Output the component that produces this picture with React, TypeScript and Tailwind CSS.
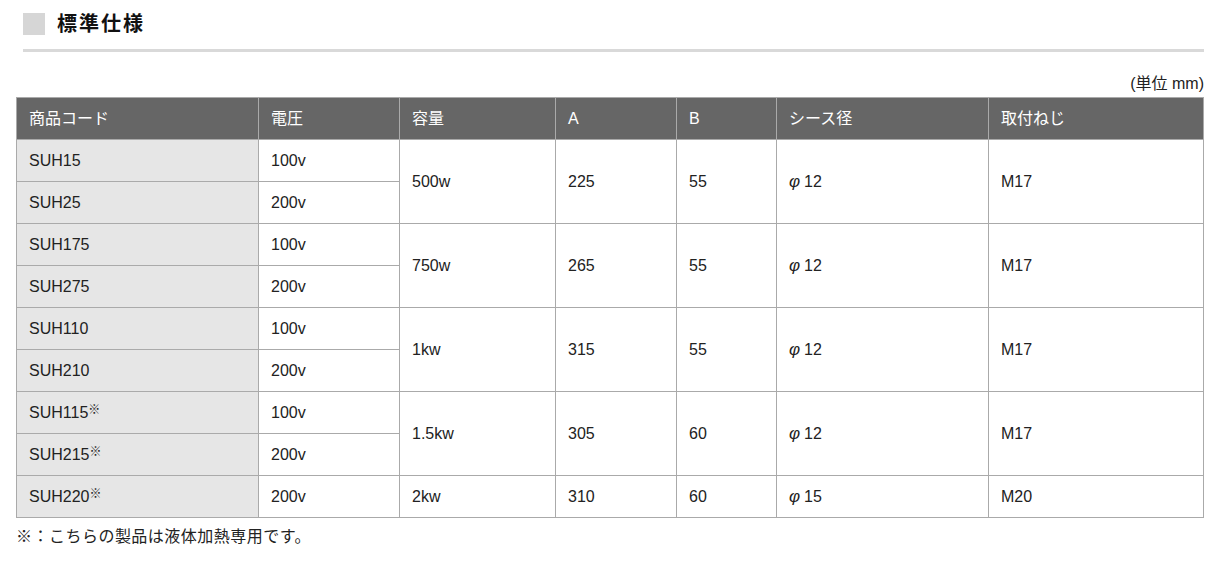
const rows: { code: string; volt: string; cap?: string; a?: string; b?: string; sheath?: string; screw?: string; span?: number }[] = [
  { code: "SUH15", volt: "100v", cap: "500w", a: "225", b: "55", sheath: "12", screw: "M17", span: 2 },
  { code: "SUH25", volt: "200v" },
  { code: "SUH175", volt: "100v", cap: "750w", a: "265", b: "55", sheath: "12", screw: "M17", span: 2 },
  { code: "SUH275", volt: "200v" },
  { code: "SUH110", volt: "100v", cap: "1kw", a: "315", b: "55", sheath: "12", screw: "M17", span: 2 },
  { code: "SUH210", volt: "200v" },
  { code: "SUH115※", volt: "100v", cap: "1.5kw", a: "305", b: "60", sheath: "12", screw: "M17", span: 2 },
  { code: "SUH215※", volt: "200v" },
  { code: "SUH220※", volt: "200v", cap: "2kw", a: "310", b: "60", sheath: "15", screw: "M20", span: 1 },
];

const headers = ["商品コード", "電圧", "容量", "A", "B", "シース径", "取付ねじ"];
const widths = ["w-[242px]", "w-[141px]", "w-[156px]", "w-[121px]", "w-[100px]", "w-[212px]", "w-[215px]"];

function Code({ text }: { text: string }) {
  if (!text.endsWith("※")) return <>{text}</>;
  return (
    <>
      {text.slice(0, -1)}
      <span className="relative -top-[4px] text-[12px] font-bold">※</span>
    </>
  );
}

export default function App() {
  const cell = "border border-[#aaaaaa] pl-3 h-[42px] align-middle";
  return (
    <div className="w-[1216px] h-[562px] bg-white text-[#222] font-['Liberation_Sans','Noto_Sans_CJK_JP',sans-serif] text-[16px]">
      <div className="pl-[16px] pr-[12px]">
        <div className="ml-[7px] pt-[13px]">
          <div className="flex items-center gap-3 h-[21px]">
            <div className="w-[22px] h-[22px] bg-[#d6d6d6]"></div>
            <h2 className="text-[20px] font-bold tracking-[0.1em] leading-none text-[#111]">標準仕様</h2>
          </div>
          <div className="mt-[15px] h-[3px] bg-[#d9d9d9]"></div>
        </div>
        <div className="mt-[22px] text-right text-[16px] leading-[20px]">(単位 mm)</div>
        <table className="mt-[3px] border-collapse table-fixed w-[1188px]">
          <thead>
            <tr className="bg-[#666666] text-white">
              {headers.map((h, i) => (
                <th key={h} className={`${cell} ${widths[i]} text-left font-normal`}>{h}</th>
              ))}
            </tr>
          </thead>
          <tbody>
            {rows.map((r) => (
              <tr key={r.code}>
                <td className={`${cell} bg-[#e6e6e6]`}><Code text={r.code} /></td>
                <td className={cell}>{r.volt}</td>
                {r.cap && (
                  <>
                    <td rowSpan={r.span} className={cell}>{r.cap}</td>
                    <td rowSpan={r.span} className={cell}>{r.a}</td>
                    <td rowSpan={r.span} className={cell}>{r.b}</td>
                    <td rowSpan={r.span} className={cell}>
                      <span className="italic text-[17px] mr-[4px]">φ</span>
                      {r.sheath}
                    </td>
                    <td rowSpan={r.span} className={cell}>{r.screw}</td>
                  </>
                )}
              </tr>
            ))}
          </tbody>
        </table>
        <p className="mt-[9px] text-[16px] leading-[20px] tracking-[0.03em]">※：こちらの製品は液体加熱専用です。</p>
      </div>
    </div>
  );
}
